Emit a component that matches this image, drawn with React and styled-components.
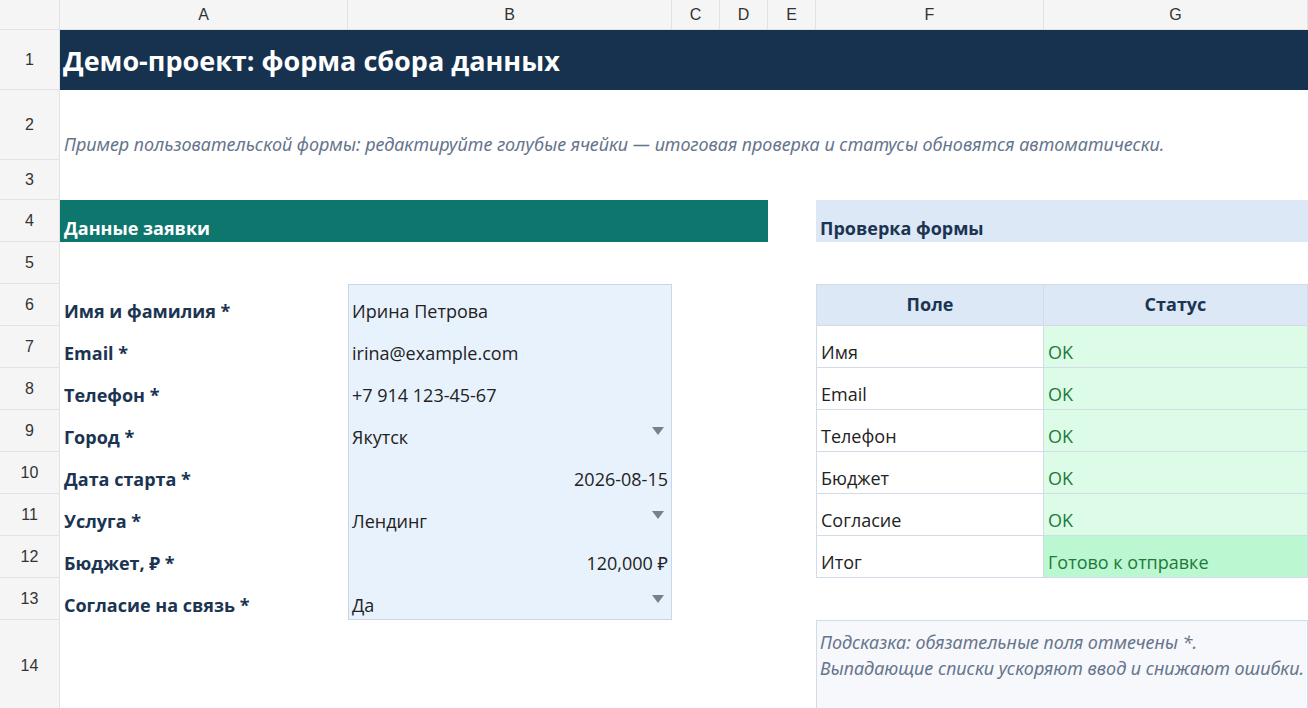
import React from "react";
import styled, { createGlobalStyle } from "styled-components";

const Global = createGlobalStyle`
  html, body { margin: 0; padding: 0; background: #fff; overflow: hidden; }
  * { box-sizing: border-box; }
`;

const Sheet = styled.div`
  display: grid;
  grid-template-columns: 60px 288px 324px 48px 48px 48px 228px 264px;
  grid-template-rows: 30px 60px 70px 40px 42px 42px repeat(8, 42px) 92px;
  width: 1308px;
  font-family: "Open Sans", "Noto Sans", sans-serif;
`;

const ColHead = styled.div`
  grid-row: 1;
  grid-column: ${p => p.c};
  background: #f5f5f5;
  border-right: 1px solid #e2e2e2;
  border-bottom: 1px solid #e2e2e2;
  display: flex; align-items: center; justify-content: center;
  font-family: "Liberation Sans", Arial, sans-serif;
  font-size: 16px; color: #333;
`;

const RowHead = styled(ColHead)`
  grid-row: ${p => p.r};
  grid-column: 1;
`;

const Cell = styled.div`
  grid-row: ${p => p.r};
  grid-column: ${p => p.c};
  position: relative;
  display: flex;
  align-items: ${p => p.$v || "flex-end"};
  justify-content: ${p => p.$h || "flex-start"};
  padding: 0 4px 3px;
  font-size: 18px;
  white-space: nowrap;
  color: #222;
  background: ${p => p.$bg || "transparent"};
`;

const Title = styled(Cell)`
  background: #17324f;
  color: #fff;
  font-weight: 700;
  font-size: 27px;
  align-items: center;
  padding: 0 3px;
`;

const Subtitle = styled(Cell)`
  font-family: "Noto Sans", "Open Sans", sans-serif;
  font-style: italic;
  color: #66758c;
  padding-bottom: 4px;
`;

const Section = styled(Cell)`
  background: ${p => p.$bg};
  color: ${p => p.$fg};
  font-weight: 700;
  padding-bottom: 2px;
`;

const Label = styled(Cell)`
  font-weight: 700;
  color: #1b3452;
`;

const InputBox = styled.div`
  grid-row: 7 / 15;
  grid-column: 3;
  background: #e8f2fd;
  border: 1px solid #c9d6e8;
`;

const Input = styled(Cell)`
  color: #222;
`;

const Arrow = styled.span`
  position: absolute;
  right: 8px;
  top: 17px;
  width: 0; height: 0;
  border-left: 6px solid transparent;
  border-right: 6px solid transparent;
  border-top: 8px solid #7a808a;
`;

const TCell = styled(Cell)`
  border-bottom: 1px solid #d2dbe8;
  border-right: 1px solid #d2dbe8;
  border-left: ${p => (p.c === 7 ? "1px solid #d2dbe8" : "none")};
  border-top: ${p => (p.r === 7 ? "1px solid #d2dbe8" : "none")};
  color: ${p => p.$fg || "#222"};
`;

const THead = styled(TCell)`
  background: #dce8f5;
  color: #1b3452;
  font-weight: 700;
  justify-content: center;
  align-items: center;
`;

const Hint = styled.div`
  grid-row: 15;
  grid-column: 7 / 9;
  background: #f6f8fb;
  border: 1px solid #d2dbe8;
  font-family: "Noto Sans", "Open Sans", sans-serif;
  font-style: italic;
  color: #66758c;
  font-size: 18px;
  line-height: 26px;
  padding: 8px 3px 0;
  white-space: normal;
`;

const cols = ["A", "B", "C", "D", "E", "F", "G"];
const labels = ["Имя и фамилия *", "Email *", "Телефон *", "Город *", "Дата старта *", "Услуга *", "Бюджет, ₽ *", "Согласие на связь *"];
const values = [
  ["Ирина Петрова"], ["irina@example.com"], ["+7 914 123-45-67"], ["Якутск", 0, 1],
  ["2026-08-15", 1], ["Лендинг", 0, 1], ["120,000 ₽", 1], ["Да", 0, 1],
];
const checks = ["Имя", "Email", "Телефон", "Бюджет", "Согласие"];

export default function App() {
  return (
    <>
      <Global />
      <Sheet>
        <ColHead c={1} />
        {cols.map((c, i) => <ColHead key={c} c={i + 2}>{c}</ColHead>)}
        {Array.from({ length: 14 }, (_, i) => <RowHead key={i} r={i + 2}>{i + 1}</RowHead>)}

        <Title r={2} c="2 / 10">Демо-проект: форма сбора данных</Title>
        <Subtitle r={3} c="2 / 10">Пример пользовательской формы: редактируйте голубые ячейки — итоговая проверка и статусы обновятся автоматически.</Subtitle>
        <Section r={5} c="2 / 6" $bg="#0f766e" $fg="#fff">Данные заявки</Section>
        <Section r={5} c="7 / 9" $bg="#dce8f5" $fg="#1b3452">Проверка формы</Section>

        <InputBox />
        {labels.map((l, i) => <Label key={l} r={i + 7} c={2}>{l}</Label>)}
        {values.map(([v, right, dd], i) => (
          <Input key={v} r={i + 7} c={3} $h={right ? "flex-end" : "flex-start"}>
            {v}{dd ? <Arrow /> : null}
          </Input>
        ))}

        <THead r={7} c={7}>Поле</THead>
        <THead r={7} c={8}>Статус</THead>
        {checks.map((n, i) => (
          <React.Fragment key={n}>
            <TCell r={i + 8} c={7}>{n}</TCell>
            <TCell r={i + 8} c={8} $bg="#dcfce7" $fg="#1e7a3a">OK</TCell>
          </React.Fragment>
        ))}
        <TCell r={13} c={7}>Итог</TCell>
        <TCell r={13} c={8} $bg="#bbf7d0" $fg="#1e7a3a">Готово к отправке</TCell>

        <Hint>Подсказка: обязательные поля отмечены *. Выпадающие списки ускоряют ввод и снижают ошибки.</Hint>
      </Sheet>
    </>
  );
}
